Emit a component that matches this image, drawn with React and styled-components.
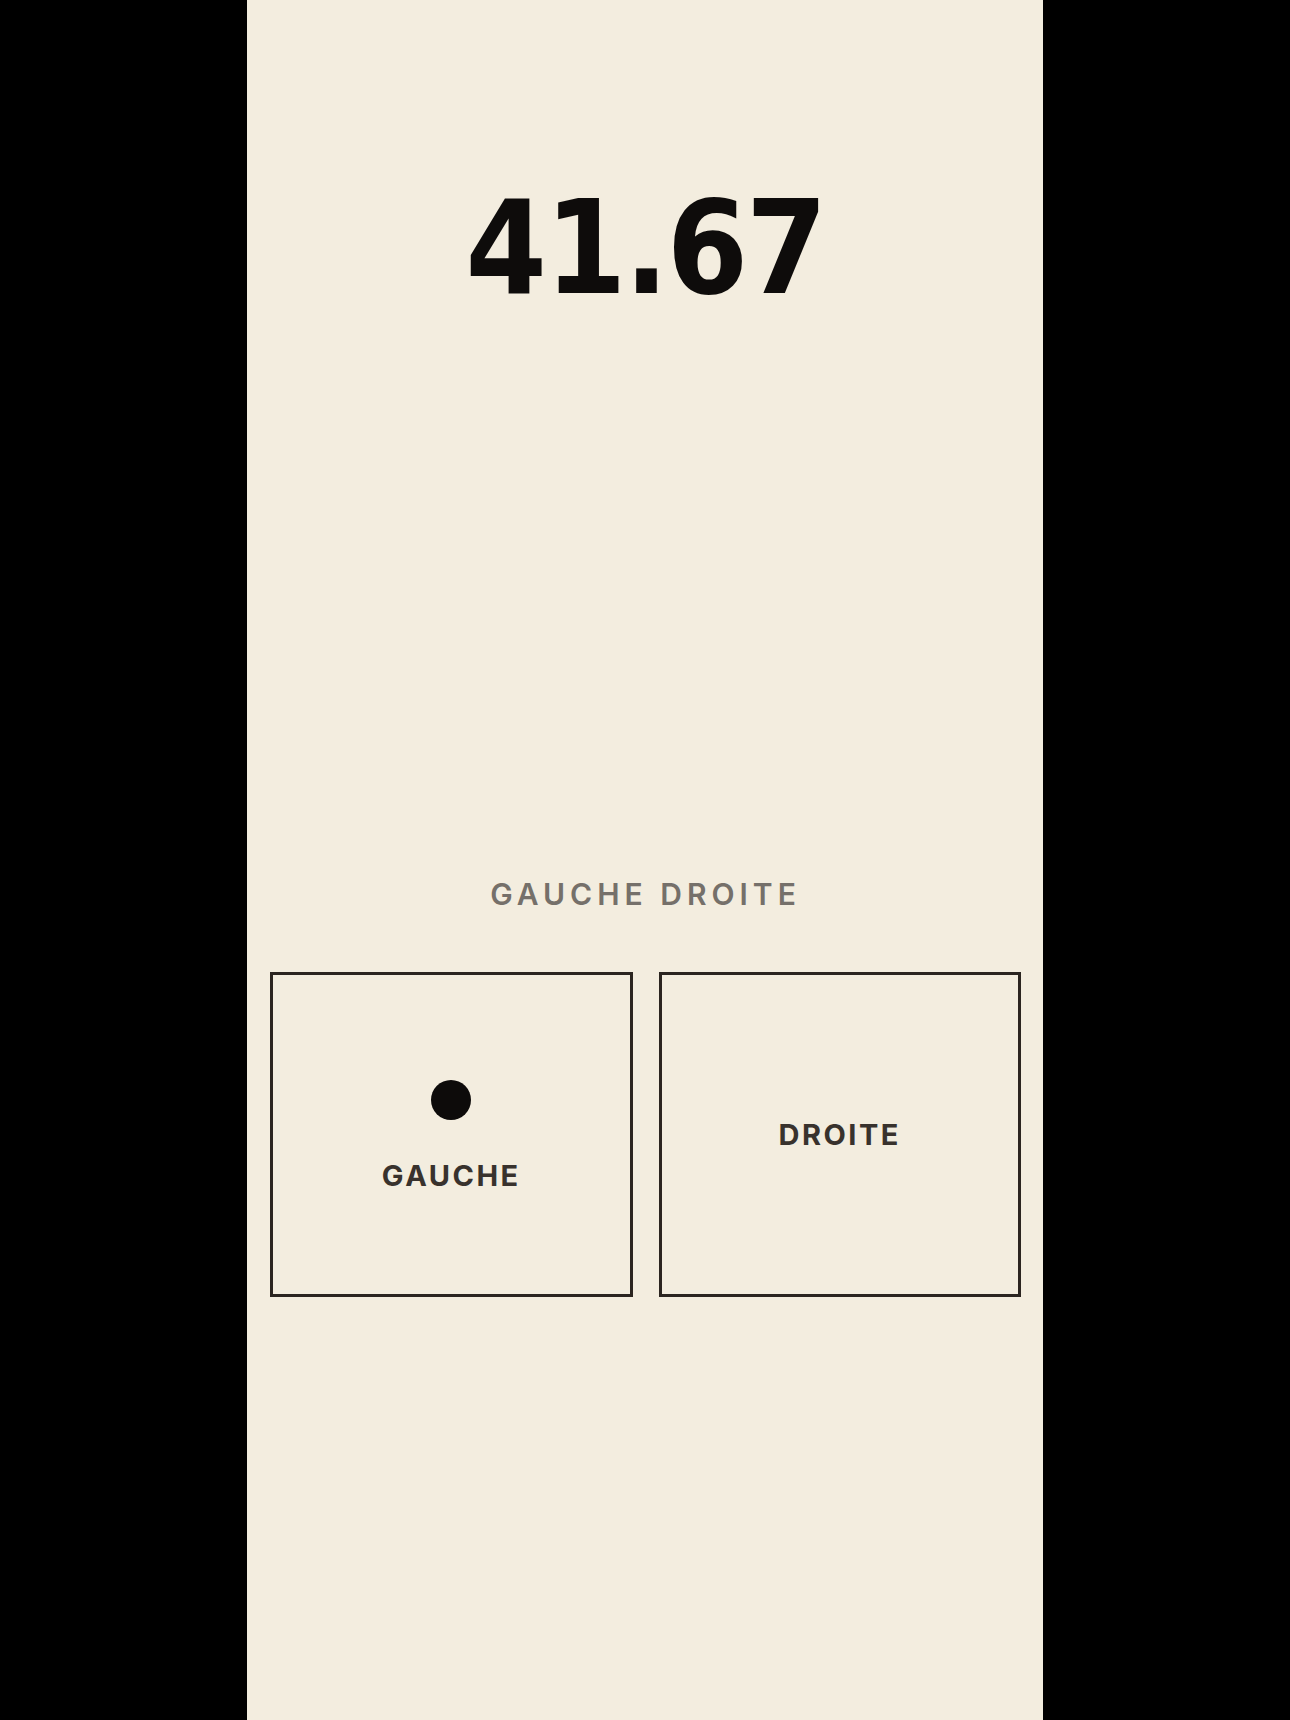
import styled, { createGlobalStyle } from "styled-components";

const GlobalStyle = createGlobalStyle`
  html, body {
    margin: 0;
    padding: 0;
    background: #000;
  }
  * {
    box-sizing: border-box;
  }
`;

const Page = styled.div`
  width: 100%;
  min-height: 1720px;
  display: flex;
  justify-content: center;
  background: #000;
`;

const Panel = styled.div`
  width: 796px;
  min-height: 1720px;
  background: #f3eddf;
  display: flex;
  flex-direction: column;
  align-items: center;
  padding: 183px 22px 0 23px;
  font-family: Inter, "Liberation Sans", sans-serif;
`;

const Score = styled.div`
  font-family: "DejaVu Sans Condensed", "DejaVu Sans", sans-serif;
  font-stretch: condensed;
  font-size: 130px;
  font-weight: 700;
  line-height: 1;
  color: #0e0c0b;
  letter-spacing: -2px;
`;

const Caption = styled.div`
  margin-top: 566px;
  font-size: 30px;
  font-weight: 600;
  letter-spacing: 5px;
  color: #75706a;
  line-height: 1;
`;

const Choices = styled.div`
  margin-top: 63px;
  width: 100%;
  display: grid;
  grid-template-columns: 1fr 1fr;
  gap: 26px;
`;

const Choice = styled.div`
  height: 325px;
  border: 3px solid #2b2520;
  display: flex;
  flex-direction: column;
  align-items: center;
  justify-content: center;
  gap: 41px;
`;

const Dot = styled.span`
  width: 40px;
  height: 40px;
  border-radius: 50%;
  background: #0d0b0a;
`;

const ChoiceLabel = styled.span`
  font-size: 29px;
  font-weight: 700;
  letter-spacing: 2.5px;
  color: #38322d;
  line-height: 1;
`;

const choices = [
  { id: "gauche", label: "GAUCHE", active: true },
  { id: "droite", label: "DROITE", active: false },
];

export default function App() {
  return (
    <>
      <GlobalStyle />
      <Page>
        <Panel>
          <Score>41.67</Score>
          <Caption>GAUCHE DROITE</Caption>
          <Choices>
            {choices.map((c) => (
              <Choice key={c.id}>
                {c.active && <Dot />}
                <ChoiceLabel>{c.label}</ChoiceLabel>
              </Choice>
            ))}
          </Choices>
        </Panel>
      </Page>
    </>
  );
}
